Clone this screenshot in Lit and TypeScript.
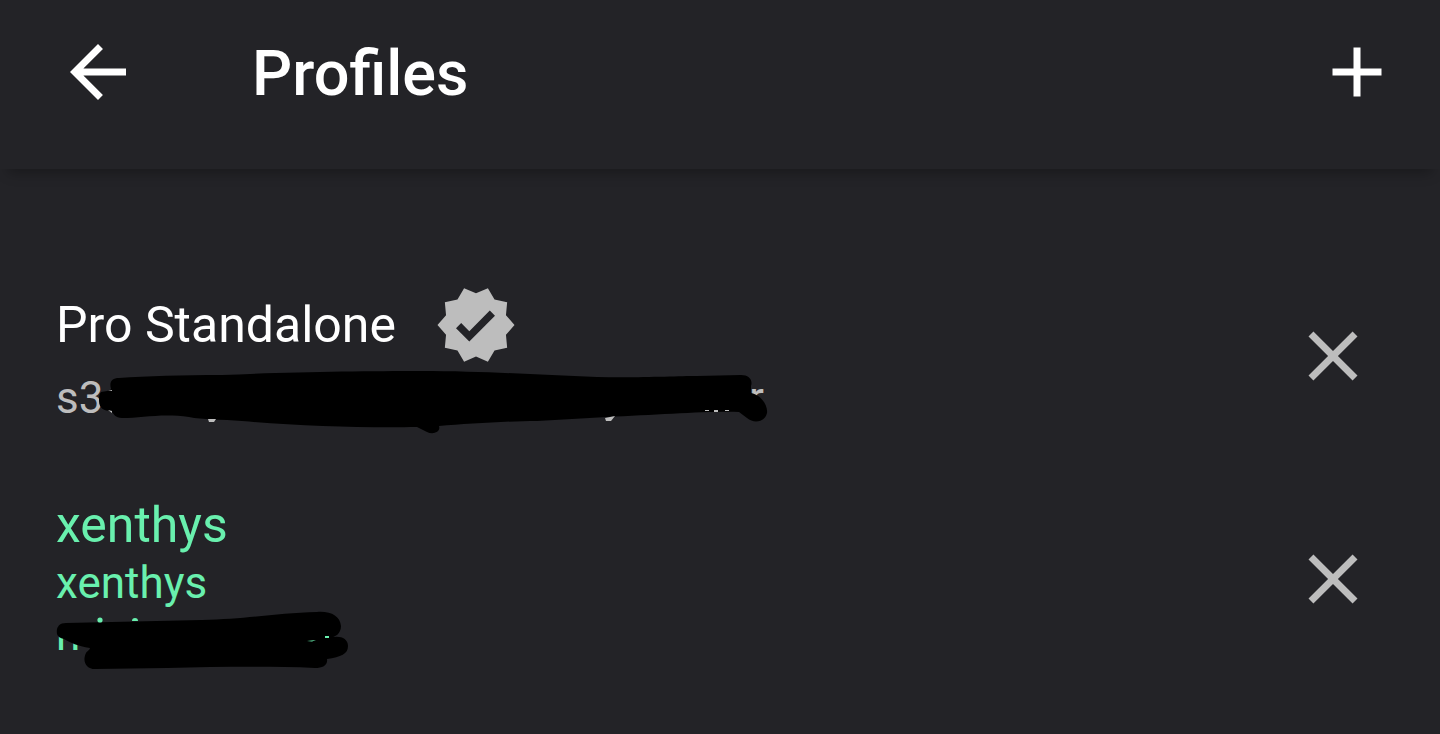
import { LitElement, html, css, svg } from "lit";
import { customElement } from "lit/decorators.js";

const icon = (d: string) => html`<svg class="icon" viewBox="0 0 24 24" aria-hidden="true"><path d=${d} /></svg>`;

const BACK = "M20 11H7.83l5.59-5.59L12 4l-8 8 8 8 1.41-1.41L7.83 13H20v-2z";
const ADD = "M19 13h-6v6h-2v-6H5v-2h6V5h2v6h6v2z";
const CLOSE = "M19 6.41L17.59 5 12 10.59 6.41 5 5 6.41 10.59 12 5 17.59 6.41 19 12 13.41 17.59 19 19 17.59 13.41 12z";
const VERIFIED =
  "M23 12l-2.44-2.79.34-3.69-3.61-.82-1.89-3.2L12 2.96 8.6 1.5 6.71 4.69 3.1 5.5l.34 3.7L1 12l2.44 2.79-.34 3.7 3.61.82L8.6 22.5l3.4-1.47 3.4 1.46 1.89-3.19 3.61-.82-.34-3.69L23 12zm-12.91 4.72l-3.8-3.81 1.48-1.48 2.32 2.33 5.85-5.87 1.48 1.48-7.33 7.35z";

/* Black marker strokes that hide the account addresses. */
const longMark = svg`
  <path class="ink" d="M44 20 C48 19 53 19 54 17 C52 10 55 6 62 6 C90 4 125 3 165 3 C230 0 310 -1 363 -1
    C430 -1 480 3 540 5 C580 6 620 4 640 4 L684 3 C692 3 696 8 694 14 L694 21 C704 23 711 33 710 41
    C708 50 697 52 690 46 L682 40 C650 39 600 43 550 45 L480 49 C450 49 410 52 382 54 C384 60 376 63 370 60
    L360 55 C310 56 240 54 185 49 C165 47 145 48 132 45 C105 41 85 46 65 46 C58 46 57 42 54 39 C47 39 42 36 42 29 C42 25 42 22 44 20Z"/>
  <path class="speck" d="M151 47h8l-2 3h-5z M548 46l10-2-4 5h-5z M648 38h4v1h-4z M657 38h4v2h-4z M668 38h4v1h-4z M51 19h4v-1z M51 38l4 3v-2z"/>`;

const shortMark = svg`
  <path class="ink" d="M0 29 C-1 22 2 18 9 18 C55 17 100 16 145 15 C190 14 220 8 260 7 C274 6 283 11 284 21
    C284 29 278 32 273 33 C282 30 291 33 291 41 C291 49 284 52 270 54 C271 60 266 63 258 63
    C210 61 160 62 110 63 L38 64 C29 64 25 56 29 48 C31 45 32 46 33 43 C20 41 14 38 7 34 C3 33 1 32 0 29Z"/>
  <circle class="speck" cx="43" cy="15" r="2.6"/>
  <path class="speck" d="M75 16 a3 3 0 0 1 6 0z M250 36l9-1-4 1.5z M268 31h4v2h-4z"/>`;

@customElement("app-root")
export class AppRoot extends LitElement {
  static styles = css`
    :host {
      display: block;
      min-height: 100vh;
      background: #232327;
      color: #fff;
      font-family: Roboto, sans-serif;
    }
    .bar {
      display: flex;
      align-items: flex-start;
      box-sizing: border-box;
      padding: 30px 41px 51px 56px;
      box-shadow: 0 12px 12px -8px rgba(0, 0, 0, 0.28);
    }
    .title {
      flex: 1;
      margin: 0 0 0 112px;
      font-size: 63px;
      line-height: 88px;
      font-weight: 500;
    }
    button {
      display: block;
      flex: none;
      margin: 0;
      padding: 0;
      border: 0;
      background: none;
      color: inherit;
      cursor: pointer;
    }
    .icon {
      display: block;
      flex: none;
      width: 84px;
      height: 84px;
      fill: currentColor;
    }
    .list {
      display: flex;
      flex-direction: column;
      gap: 67px;
      margin: 0;
      padding: 114px 65px 60px 56px;
      list-style: none;
    }
    .row {
      display: flex;
      align-items: center;
    }
    .info {
      flex: 1;
      min-width: 0;
    }
    .name {
      display: flex;
      align-items: center;
      gap: 38px;
      margin: 0 0 3px;
      font-size: 50px;
      line-height: 58px;
      font-weight: 400;
    }
    .muted {
      color: #bdbdbd;
    }
    .line {
      margin: 0;
      font-size: 44px;
      line-height: 52px;
    }
    .address {
      position: relative;
      display: flex;
      justify-content: space-between;
      width: 708px;
      max-width: 100%;
    }
    .spaced {
      padding: 2px 0 5px;
    }
    .active {
      color: #69f0ae;
    }
    .mark {
      position: absolute;
      left: 0;
      top: 0;
      width: 720px;
      height: 64px;
      overflow: visible;
    }
    .ink {
      fill: #000;
    }
    .speck {
      fill: currentColor;
    }
  `;

  render() {
    return html`
      <header class="bar">
        <button aria-label="Back">${icon(BACK)}</button>
        <h1 class="title">Profiles</h1>
        <button aria-label="Add profile">${icon(ADD)}</button>
      </header>
      <ul class="list">
        <li class="row">
          <div class="info">
            <h2 class="name">Pro Standalone<span class="muted">${icon(VERIFIED)}</span></h2>
            <div class="spaced">
              <p class="line address muted">
                <span>s3</span><span>r</span>
                <svg class="mark" viewBox="-1 0 720 64" aria-hidden="true">${longMark}</svg>
              </p>
            </div>
          </div>
          <button class="muted" aria-label="Remove Pro Standalone">${icon(CLOSE)}</button>
        </li>
        <li class="row">
          <div class="info active">
            <h2 class="name">xenthys</h2>
            <p class="line">xenthys</p>
            <p class="line address">
              <span>n</span>
              <svg class="mark" viewBox="-1 4 720 64" aria-hidden="true">${shortMark}</svg>
            </p>
          </div>
          <button class="muted" aria-label="Remove xenthys">${icon(CLOSE)}</button>
        </li>
      </ul>
    `;
  }
}
